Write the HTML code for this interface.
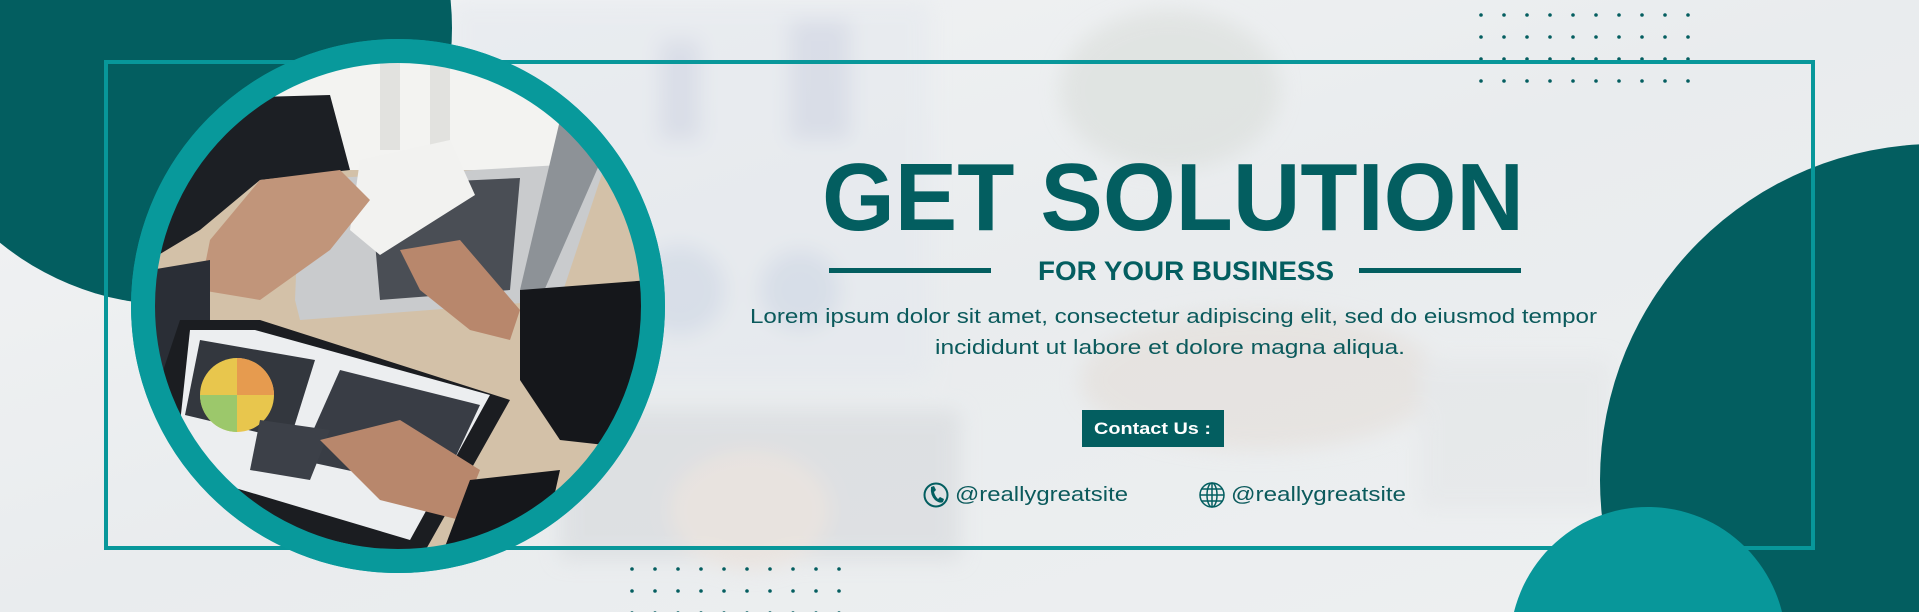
<!DOCTYPE html>
<html><head><meta charset="utf-8"><style>
html,body{margin:0;padding:0;width:1919px;height:612px;overflow:hidden;background:#eef0f1}
svg{display:block;overflow:hidden}
text{font-family:"Liberation Sans",sans-serif}
</style></head><body>
<svg width="1919" height="612" viewBox="0 0 1919 612" xmlns="http://www.w3.org/2000/svg">
<defs>
<linearGradient id="bg" x1="0" y1="0" x2="1" y2="1">
<stop offset="0" stop-color="#f3f4f5"/><stop offset="0.5" stop-color="#e9ecee"/><stop offset="1" stop-color="#eef0f1"/>
</linearGradient>
<filter id="bl"><feGaussianBlur stdDeviation="10"/></filter>
<clipPath id="cc"><circle cx="398" cy="306" r="244"/></clipPath>
<pattern id="dots1" x="1479" y="13" width="23" height="22" patternUnits="userSpaceOnUse"><circle cx="2" cy="2" r="1.8" fill="#045e60"/></pattern>
<pattern id="dots2" x="630" y="567" width="23" height="22" patternUnits="userSpaceOnUse"><circle cx="2" cy="2" r="1.8" fill="#045e60"/></pattern>
</defs>
<rect width="1919" height="612" fill="url(#bg)"/>
<g filter="url(#bl)" opacity="0.55">
<rect x="450" y="0" width="480" height="380" fill="#e4e8ee"/>
<rect x="660" y="40" width="40" height="100" fill="#c9cfe0"/>
<rect x="790" y="20" width="60" height="120" fill="#c9cfe0"/>
<circle cx="680" cy="290" r="45" fill="#c9d3e3"/>
<ellipse cx="800" cy="290" rx="40" ry="40" fill="#c9d3e3"/>
<rect x="560" y="410" width="400" height="150" fill="#d4d7da"/>
<ellipse cx="1170" cy="90" rx="110" ry="80" fill="#d8dcd8"/>
<ellipse cx="1260" cy="380" rx="180" ry="70" fill="#e3dcd6"/>
<rect x="1420" y="360" width="190" height="150" fill="#e3e5e7"/>
<ellipse cx="750" cy="510" rx="80" ry="60" fill="#e8dcd3"/>
</g>
<circle cx="175" cy="28" r="277" fill="#035e60"/>
<circle cx="1936" cy="480" r="336" fill="#035e60"/>
<circle cx="1648" cy="645" r="138" fill="#08979a"/>
<rect x="1479" y="13" width="230" height="88" fill="url(#dots1)"/>
<rect x="630" y="567" width="230" height="45" fill="url(#dots2)"/>
<rect x="106" y="62" width="1707" height="486" fill="none" stroke="#08979a" stroke-width="4"/>
<circle cx="398" cy="306" r="267" fill="#08999b"/>
<g clip-path="url(#cc)">
<rect x="150" y="60" width="500" height="500" fill="#d3c1a8"/>
<rect x="150" y="60" width="500" height="110" fill="#f3f3f1"/>
<rect x="380" y="60" width="20" height="90" fill="#e2e2df"/>
<rect x="430" y="60" width="20" height="90" fill="#e2e2df"/>
<path d="M150 100 L330 95 L350 170 L260 180 L200 230 L150 260Z" fill="#1c1f24"/>
<path d="M300 180 L560 165 L600 120 L610 150 L560 300 L300 320 L295 300Z" fill="#c9cbcd"/>
<path d="M560 120 L610 140 L540 300 L520 290Z" fill="#8d9297"/>
<path d="M370 185 L520 178 L510 290 L380 300Z" fill="#4a4e55"/>
<path d="M360 160 L450 140 L475 195 L380 255 L350 230Z" fill="#f2f2f0"/>
<path d="M260 180 L340 170 L370 200 L330 250 L260 300 L200 290 L210 240Z" fill="#c1957a"/>
<path d="M150 270 L210 260 L210 380 L150 380Z" fill="#2a2e36"/>
<path d="M400 250 L460 240 L520 310 L510 340 L470 330 L420 290Z" fill="#b8876c"/>
<path d="M520 290 L650 280 L650 450 L560 440 L520 380Z" fill="#15171b"/>
<path d="M180 320 L260 320 L510 400 L420 560 L150 500 L160 380Z" fill="#1b1d21"/>
<path d="M190 330 L255 330 L490 395 L410 540 L175 470Z" fill="#eceef0"/>
<path d="M200 340 L315 360 L290 440 L185 415Z" fill="#33373e"/>
<circle cx="237" cy="395" r="37" fill="#e8c64d"/>
<path d="M237 395 L237 358 A37 37 0 0 1 274 395Z" fill="#e69b4f"/>
<path d="M237 395 L200 395 A37 37 0 0 0 237 432Z" fill="#9cc86b"/>
<path d="M340 370 L480 405 L440 490 L300 460Z" fill="#393d45"/>
<path d="M260 420 L330 430 L310 480 L250 470Z" fill="#3c4048"/>
<path d="M320 440 L400 420 L480 470 L460 520 L380 500Z" fill="#b8876c"/>
<path d="M470 480 L560 470 L540 560 L440 560Z" fill="#15171b"/>
</g>
<circle cx="398" cy="306" r="255" fill="none" stroke="#08999b" stroke-width="24"/>
<text x="822" y="230" font-size="96" font-weight="bold" fill="#035e60" textLength="702" lengthAdjust="spacingAndGlyphs">GET SOLUTION</text>
<rect x="829" y="268" width="162" height="5" fill="#035e60"/>
<rect x="1359" y="268" width="162" height="5" fill="#035e60"/>
<text x="1038" y="280" font-size="27" font-weight="bold" fill="#035e60" textLength="296" lengthAdjust="spacingAndGlyphs">FOR YOUR BUSINESS</text>
<text x="750" y="323" font-size="20" fill="#0b5a5c" textLength="847" lengthAdjust="spacingAndGlyphs">Lorem ipsum dolor sit amet, consectetur adipiscing elit, sed do eiusmod tempor</text>
<text x="935" y="354" font-size="20" fill="#0b5a5c" textLength="470" lengthAdjust="spacingAndGlyphs">incididunt ut labore et dolore magna aliqua.</text>
<rect x="1082" y="410" width="142" height="37" fill="#035e60"/>
<text x="1094" y="434" font-size="17" font-weight="bold" fill="#ffffff" textLength="117" lengthAdjust="spacingAndGlyphs">Contact Us :</text>
<circle cx="936" cy="495" r="11.5" fill="none" stroke="#035e60" stroke-width="2"/>
<path d="M931 487 L934 486 L936 490 L934 492 Q935 496 938 499 L940 497 L944 499 L943 502 Q940 504 935 500 Q930 495 931 487Z" fill="#035e60"/>
<text x="955" y="501" font-size="20" fill="#0b5a5c" textLength="173" lengthAdjust="spacingAndGlyphs">@reallygreatsite</text>
<g fill="none" stroke="#035e60" stroke-width="1.5">
<circle cx="1212" cy="495" r="12"/>
<ellipse cx="1212" cy="495" rx="5" ry="12"/>
<line x1="1212" y1="483" x2="1212" y2="507"/>
<line x1="1200" y1="495" x2="1224" y2="495"/>
<line x1="1202" y1="489" x2="1222" y2="489"/>
<line x1="1202" y1="501" x2="1222" y2="501"/>
</g>
<text x="1231" y="501" font-size="20" fill="#0b5a5c" textLength="175" lengthAdjust="spacingAndGlyphs">@reallygreatsite</text>
</svg>
</body></html>
